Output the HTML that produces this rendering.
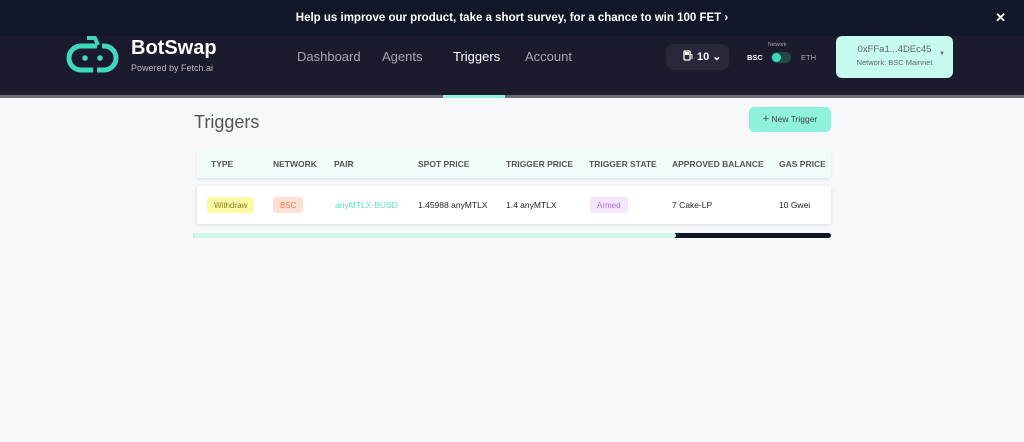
<!DOCTYPE html>
<html><head><meta charset="utf-8"><style>
*{margin:0;padding:0;box-sizing:border-box}
body{width:1024px;height:442px;background:#f7f8fa;font-family:"Liberation Sans",sans-serif;position:relative;overflow:hidden}
.banner{position:absolute;top:0;left:0;width:1024px;height:36px;background:#111629;color:#fff;font-weight:bold;font-size:11.5px;text-align:center;line-height:36px}
.banner .x{position:absolute;right:18px;top:0;font-size:13px}
.nav{position:absolute;top:36px;left:0;width:1024px;height:59px;background:#1c1a2d}
.line{position:absolute;top:95px;left:0;width:1024px;height:3px;background:#6b6b78}
.ind{position:absolute;top:95px;left:443px;width:62px;height:3px;background:#8ff0dc}
.brand{position:absolute;left:131px;top:37px;color:#fff;font-weight:bold;font-size:20px}
.sub{position:absolute;left:131px;top:63px;color:#bbb;font-size:9px}
.nl{position:absolute;top:49px;font-size:13px;color:#a7a7b3}
.gas{position:absolute;left:666px;top:44px;width:63px;height:26px;background:#292839;border-radius:7px;color:#fff;font-size:11px;font-weight:bold;line-height:26px;padding-left:17px}
.netl{position:absolute;left:768px;top:42px;font-size:5px;color:#aaa}
.tog{position:absolute;left:771px;top:52px;width:20px;height:11px;border-radius:6px;background:#1f4a44}
.tog i{position:absolute;left:1px;top:1px;width:9px;height:9px;border-radius:50%;background:#3ed8bf}
.wal{position:absolute;left:836px;top:36px;width:117px;height:42px;background:#c6faf0;border-radius:6px;color:#666;text-align:center}
h1{position:absolute;left:194px;top:112px;font-size:18px;font-weight:normal;color:#555}
.btn{position:absolute;left:749px;top:107px;width:82px;height:25px;background:#8ff0dc;border-radius:5px;font-size:8.5px;color:#444;line-height:25px;text-align:center}
.hdr{position:absolute;left:197px;top:150px;width:634px;height:28px;background:#f0fcf9;box-shadow:0 2px 3px rgba(0,0,0,.08)}
.row{position:absolute;left:197px;top:186px;width:634px;height:38px;background:#fff;box-shadow:0 1px 4px rgba(0,0,0,.12)}
.c{position:absolute;font-size:8.5px;white-space:nowrap}
.hdr .c{top:9px;color:#555;font-weight:bold}
.row .c{top:14px;color:#222}
.tag{position:absolute;top:11px;height:16px;padding:0 7px;border-radius:3px;font-size:8px;display:flex;align-items:center}
.sb{position:absolute;left:193px;top:233px;width:638px;height:5px;background:#111629;border-radius:3px}
.sb i{position:absolute;left:0;top:0;width:483px;height:5px;background:#d0f8ef;border-radius:3px}
</style></head><body>
<div class="banner">Help us improve our product, take a short survey, for a chance to win 100 FET ›<span class="x">✕</span></div>
<div class="nav"></div>
<svg style="position:absolute;left:66px;top:35px" width="53" height="38" viewBox="0 0 53 38"><path d="M21 3 L29 3 L32 10" fill="none" stroke="#3ed8bf" stroke-width="4" stroke-linejoin="round"/><path d="M27 35 L15 35 A12 12 0 0 1 15 11 L31 11" fill="none" stroke="#3ed8bf" stroke-width="5"/><path d="M31 35 L38 35 A12 12 0 0 0 38 11 L36 11" fill="none" stroke="#3ed8bf" stroke-width="5"/><circle cx="19" cy="23" r="2.8" fill="#3ed8bf"/><circle cx="34" cy="23" r="2.8" fill="#3ed8bf"/></svg>
<div class="brand">BotSwap</div><div class="sub">Powered by Fetch.ai</div>
<div class="nl" style="left:297px">Dashboard</div>
<div class="nl" style="left:382px">Agents</div>
<div class="nl" style="left:453px;color:#fff">Triggers</div>
<div class="nl" style="left:525px">Account</div>
<div class="gas"><svg width="10" height="11" style="vertical-align:-1px;margin-right:4px"><rect x="1" y="1" width="6" height="9" rx="1" fill="none" stroke="#fff" stroke-width="1.3"/><rect x="2" y="2" width="4" height="3" fill="#fff"/><path d="M7 4 L9 5 L9 9" fill="none" stroke="#fff"/></svg>10 ⌄</div>
<div class="netl">Network</div>
<div class="c" style="left:747px;top:53px;color:#fff;font-weight:bold;font-size:7.5px">BSC</div>
<div class="tog"><i></i></div>
<div class="c" style="left:801px;top:53px;color:#aaa;font-size:7.5px">ETH</div>
<div class="wal"><div style="font-size:9.5px;margin-top:8px">0xFFa1...4DEc45</div><div style="font-size:7.5px;margin-top:3px">Network: BSC Mainnet</div><span style="position:absolute;right:8px;top:15px;font-size:6px">▼</span></div>
<div class="line"></div><div class="ind"></div>
<h1>Triggers</h1>
<div class="btn"><span style="font-size:11px">+</span> New Trigger</div>
<div class="hdr">
<div class="c" style="left:14px">TYPE</div><div class="c" style="left:76px">NETWORK</div><div class="c" style="left:137px">PAIR</div><div class="c" style="left:221px">SPOT PRICE</div><div class="c" style="left:309px">TRIGGER PRICE</div><div class="c" style="left:392px">TRIGGER STATE</div><div class="c" style="left:475px">APPROVED BALANCE</div><div class="c" style="left:582px">GAS PRICE</div>
</div>
<div class="row">
<div class="tag" style="left:10px;background:#fdf9a6;color:#8a7d1c">Withdraw</div>
<div class="tag" style="left:76px;background:#fde0d4;color:#f07a4f">BSC</div>
<div class="c" style="left:138px;color:#5fdcc4">anyMTLX-BUSD</div>
<div class="c" style="left:221px">1.45988 anyMTLX</div>
<div class="c" style="left:309px">1.4 anyMTLX</div>
<div class="tag" style="left:393px;background:#f4e6fb;color:#b474d8">Armed</div>
<div class="c" style="left:475px">7 Cake-LP</div>
<div class="c" style="left:582px">10 Gwei</div>
</div>
<div class="sb"><i></i></div>
</body></html>
